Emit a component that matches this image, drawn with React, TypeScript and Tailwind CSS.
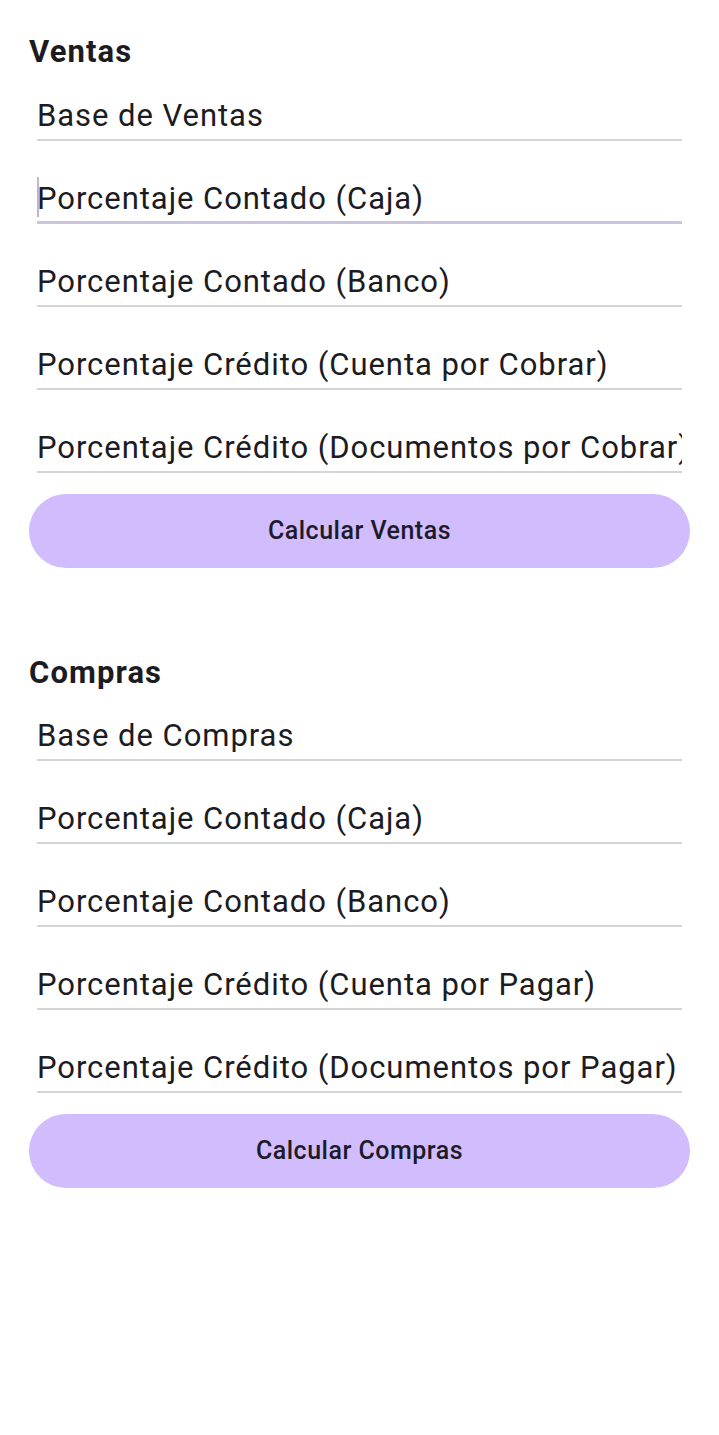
import { useState } from 'react';

type Section = {
  title: string;
  fields: string[];
  action: string;
};

const sections: Section[] = [
  {
    title: 'Ventas',
    fields: [
      'Base de Ventas',
      'Porcentaje Contado (Caja)',
      'Porcentaje Contado (Banco)',
      'Porcentaje Crédito (Cuenta por Cobrar)',
      'Porcentaje Crédito (Documentos por Cobrar)',
    ],
    action: 'Calcular Ventas',
  },
  {
    title: 'Compras',
    fields: [
      'Base de Compras',
      'Porcentaje Contado (Caja)',
      'Porcentaje Contado (Banco)',
      'Porcentaje Crédito (Cuenta por Pagar)',
      'Porcentaje Crédito (Documentos por Pagar)',
    ],
    action: 'Calcular Compras',
  },
];

export default function App() {
  // the second field of the first form has focus in the screenshot
  const [focused, setFocused] = useState('Ventas-1');

  return (
    <div className="min-h-[1435px] w-full bg-white px-[29px] pt-[34px] font-['Roboto',sans-serif] text-[#1c1b1f]">
      {sections.map((section, si) => (
        <div key={section.title} className={si > 0 ? 'mt-[87px]' : ''}>
          <h2 className="h-9 text-[31px] leading-9 font-bold tracking-[1.1px]">{section.title}</h2>

          <div className={`${si > 0 ? 'mt-[27px]' : 'mt-[28px]'} flex flex-col gap-[40px] px-[8px]`}>
            {section.fields.map((label, i) => {
              const id = `${section.title}-${i}`;
              const isFocused = focused === id;
              return (
                <div
                  key={id}
                  onClick={() => setFocused(id)}
                  className={
                    isFocused
                      ? 'relative border-b-[3px] border-[#cac4dc] pb-[4px]'
                      : 'relative border-b-2 border-[#d4d4d4] pb-[5px]'
                  }
                >
                  {isFocused && (
                    <span className="absolute top-[-4px] left-0 h-[40px] w-[2px] bg-[#bdb5d3]" />
                  )}
                  <div className="h-9 overflow-hidden whitespace-nowrap text-[31px] leading-9 tracking-[0.95px]">
                    {label}
                  </div>
                </div>
              );
            })}
          </div>

          <button className="mt-[21px] flex h-[74px] w-full items-center justify-center rounded-full bg-[#d1bcfd] text-[25px] font-medium tracking-[0.5px] text-[#1d1b2a]">
            {section.action}
          </button>
        </div>
      ))}
    </div>
  );
}
